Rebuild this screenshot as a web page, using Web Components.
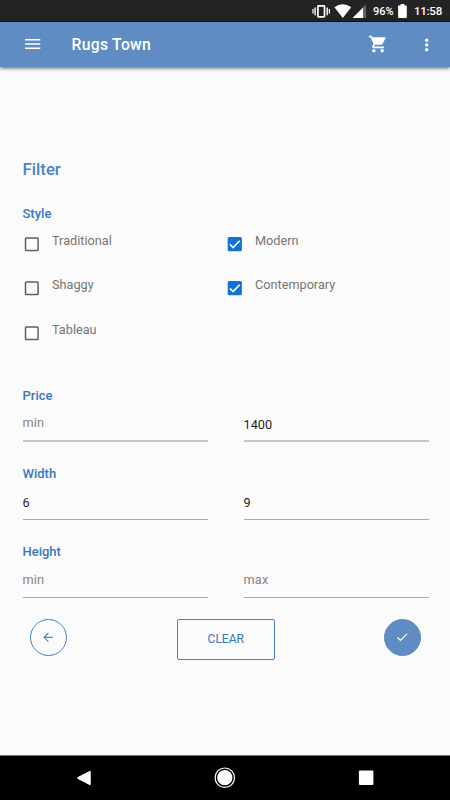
<!DOCTYPE html>
<html lang="en">
<head>
<meta charset="utf-8">
<title>Rugs Town</title>
<style>
html,body{margin:0;height:100%;background:#fbfbfb}
body{font-family:Roboto,"Liberation Sans",sans-serif;font-size:13px}
</style>
</head>
<body>
<rugs-app></rugs-app>
<script>
function define(name, markup) {
  const t = document.createElement('template');
  customElements.define(name, class extends HTMLElement {
    constructor() {
      super();
      t.innerHTML = markup(this);
      this.attachShadow({mode: 'open'}).append(t.content.cloneNode(true));
    }
  });
}

define('status-bar', () => `
<style>
:host{display:flex;box-sizing:border-box;height:22px;padding:0 8px 0 0;background:#242424;border-bottom:1px solid #101018;align-items:center;justify-content:flex-end;color:#fff;font-weight:500}
svg{display:block;flex:none;fill:#fff;margin-top:1px}
.pct{font-size:11px;width:21px;margin:2px 4px 0 7px;white-space:nowrap}
.time{font-size:11.500px;letter-spacing:-.25px;margin:1px 0 0 7px;width:28px;white-space:nowrap}
</style>
<svg width="54" height="15" viewBox="313 4 54 15">
 <rect x="318.9" y="5.9" width="6.6" height="11" rx=".6" fill="none" stroke="#fff" stroke-width="1.7"/>
 <path d="M313.4 9h1.2v4.6h-1.2zM315.4 7.6h1.4v7.6h-1.4zM327.5 7.6h1.4v7.6h-1.4zM329.8 9h1.2v4.6h-1.2z"/>
 <path d="M335.4 7.2Q343.7 1.2 352.2 7.2L343.8 18z"/>
 <path d="M367 4.5V18H353.6z" fill="#666"/><path d="M364 7.5V18H353.6z"/>
</svg>
<span class="pct">96%</span>
<svg width="9" height="14" viewBox="0 0 9 14"><path d="M2.6 0h3.8v1.5H8.3q.5 0 .5.6v11.2q0 .6-.5.6H.7q-.6 0-.6-.6V2.1q0-.6.6-.6h1.9z"/></svg>
<span class="time">11:58</span>`);

define('app-header', () => `
<style>
:host{display:flex;box-sizing:border-box;height:45px;padding:0 15px 0 24px;background:#5f8dc3;color:#fff;align-items:center;box-shadow:0 1px 4px rgba(0,0,0,.65)}
svg{fill:#fff;flex:none}
h1{flex:1;margin:0 0 0 30.500px;font-size:15.700px;line-height:20px;font-weight:500;letter-spacing:.3px}
.cart{margin-top:-1px}
.dots{margin-left:31px}
.menu{margin-top:-1px}
</style>
<svg class="menu" width="17" height="12" viewBox="0 0 17 12"><path d="M1 1h15.3v1.6H1zM1 5.2h15.3v1.6H1zM1 9.4h15.3V11H1z"/></svg>
<h1><slot></slot></h1>
<svg class="cart" width="20" height="20" viewBox="0 0 24 24"><path d="M7 18c-1.1 0-2 .9-2 2s.9 2 2 2 2-.9 2-2-.9-2-2-2zM1 2v2h2l3.6 7.6-1.4 2.4c-.7 1.3.3 3 1.800 3h12v-2H7.400a.25.25 0 0 1-.2-.4l.9-1.600h7.450c.75 0 1.400-.4 1.750-1L20.900 5.500A1 1 0 0 0 20 4H5.200L4.300 2zM17 18c-1.100 0-2 .9-2 2s.9 2 2 2 2-.9 2-2-.9-2-2-2z"/></svg>
<svg class="dots" width="16" height="16" viewBox="0 0 16 16"><circle cx="7.700" cy="3.200" r="1.750"/><circle cx="7.700" cy="8" r="1.750"/><circle cx="7.700" cy="12.800" r="1.750"/></svg>`);

define('check-option', el => `
<style>
:host{display:flex;height:44.650px;align-items:flex-start}
svg{flex:none;margin:15px 13px 0 1.500px}
span{font-size:12.700px;line-height:16px;margin-top:11.300px;color:#757575}
</style>
<svg width="15" height="15" viewBox="0 0 15 15">${el.hasAttribute('checked')
 ? '<rect x=".7" y="0" width="14.200" height="14.200" rx="1.500" fill="#1073d6"/><path d="M3 7.400L6.100 10.500L12.700 3.800" fill="none" stroke="#fff" stroke-width="1.600"/>'
 : '<rect x="1.500" y=".9" width="12.600" height="12.600" rx=".8" fill="none" stroke="#606060" stroke-width="1.500"/>'}</svg>
<span><slot></slot></span>`);

define('text-field', el => `
<style>
:host{display:block;box-sizing:border-box;height:38px;border-bottom:1px solid #aaa;font-size:12.700px;line-height:16px;padding-top:13px;color:#1c1c1c}
:host([placeholder]){color:#858585;padding-top:12px;letter-spacing:.2px}
:host([heavy]){border-bottom:2px solid #c6c6c6}
:host([heavy][placeholder]){padding-top:11px}
</style>
<slot></slot>`);

define('range-group', el => `
<style>
:host{display:block;height:78px}
h3{margin:0;font-size:13px;line-height:16px;font-weight:500;color:#3878bd}
div{display:grid;grid-template-columns:185px 185px;column-gap:36px}
</style>
<h3>${el.getAttribute('label')}</h3><div><slot></slot></div>`);

define('action-button', el => `
<style>
:host{display:flex;box-sizing:border-box;align-items:center;justify-content:center;width:37px;height:37px;border:1px solid #4782c3;border-radius:50%;color:#3475bb;font-size:12px}
:host([wide]){width:98px;height:41px;border-radius:2px}
:host([filled]){background:#5f8dc3;border-color:#5f8dc3}
</style>
<slot></slot>`);

define('nav-bar', () => `
<style>
:host{display:flex;box-sizing:border-box;height:45px;background:#000;border-top:1px solid #777;align-items:center;justify-content:space-between;padding:0 76px}
svg{display:block}
</style>
<svg width="16" height="16" viewBox="0 0 16 16"><path d="M14.200 1.200V14.800L1.800 8.400Q1.300 8 1.800 7.600z" fill="#fff" stroke="#fff" stroke-linejoin="round"/></svg>
<svg width="22" height="22" viewBox="0 0 22 22"><circle cx="10.800" cy="10.700" r="9.700" fill="none" stroke="#fff" stroke-width="1.200"/><circle cx="10.800" cy="10.700" r="7.600" fill="#fff"/></svg>
<svg width="16" height="16" viewBox="0 0 16 16"><rect x=".9" y=".6" width="14.500" height="14.500" rx="1" fill="#fff"/></svg>`);

define('rugs-app', () => `
<style>
:host{display:flex;flex-direction:column;height:800px;background:#fbfbfb}
main{flex:1;padding:90px 22px 0 22.500px}
h2{margin:0 0 24.500px;font-size:16.800px;line-height:24px;font-weight:500;color:#4a82c2}
h3{margin:0;font-size:13px;line-height:16px;font-weight:500;color:#3878bd}
.opts{display:grid;grid-template-columns:203px 1fr;margin-bottom:32.500px}
footer{display:flex;justify-content:space-between;align-items:flex-start;margin:-3px 7.500px 0 7px}
footer [wide]{margin-left:1.500px}
</style>
<status-bar></status-bar>
<app-header>Rugs Town</app-header>
<main>
 <h2>Filter</h2>
 <h3>Style</h3>
 <section class="opts">
  <check-option>Traditional</check-option><check-option checked>Modern</check-option>
  <check-option>Shaggy</check-option><check-option checked>Contemporary</check-option>
  <check-option>Tableau</check-option>
 </section>
 <range-group label="Price"><text-field placeholder heavy>min</text-field><text-field heavy>1400</text-field></range-group>
 <range-group label="Width"><text-field>6</text-field><text-field>9</text-field></range-group>
 <range-group label="Height"><text-field placeholder>min</text-field><text-field placeholder>max</text-field></range-group>
 <footer>
  <action-button><svg width="12" height="12" viewBox="0 0 12 12"><path d="M10.900 6.300H2.400M6.400 2L2.100 6.300L6.400 10.600" fill="none" stroke="#5588c6" stroke-width="1.200"/></svg></action-button>
  <action-button wide>CLEAR</action-button>
  <action-button filled><svg width="12" height="12" viewBox="0 0 12 12"><path d="M1.400 6.500L4.400 9.500L11.100 2.800" fill="none" stroke="#fff" stroke-width="1.200"/></svg></action-button>
 </footer>
</main>
<nav-bar></nav-bar>`);
</script>
</body>
</html>
